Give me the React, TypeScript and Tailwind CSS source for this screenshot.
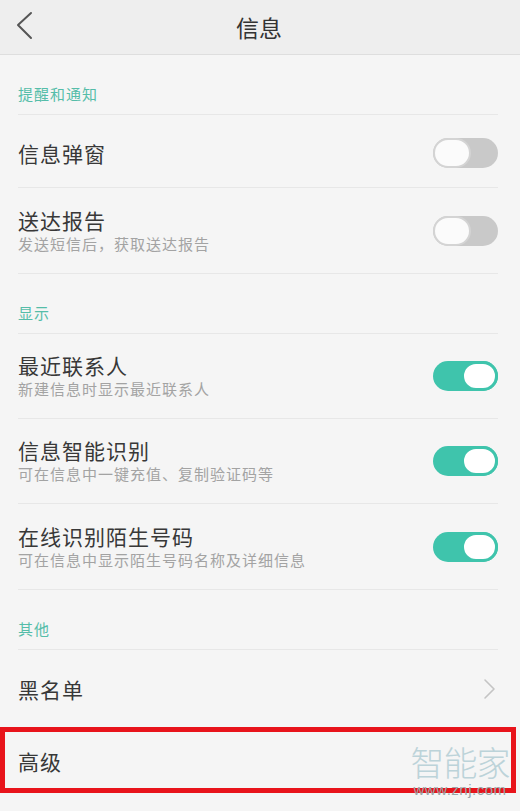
import React from "react";

const font = { fontFamily: '"Noto Sans CJK SC", "Noto Sans", sans-serif' };

function Toggle({ on }: { on: boolean }) {
  if (on) {
    return (
      <div className="relative h-[30px] w-[65px] shrink-0 rounded-full bg-[#3fc4ac]">
        <div className="absolute right-0 top-0 h-[30px] w-[37px] rounded-full border-[3px] border-[#3fc4ac] bg-white" />
      </div>
    );
  }
  return (
    <div className="relative h-[30px] w-[65px] shrink-0 rounded-full bg-[#c9c9c9]">
      <div className="absolute left-0 top-0 h-[30px] w-[38px] rounded-full border-2 border-[#d4d4d4] bg-[#fbfbfb]" />
    </div>
  );
}

function SectionHeader({ label }: { label: string }) {
  return (
    <div className="flex h-[59px] items-end pb-[10px]">
      <span className="text-[15px] leading-[20px] tracking-[1px] text-[#55bda9]">{label}</span>
    </div>
  );
}

function Divider() {
  return <div className="h-px bg-[#e7e7e7]" />;
}

function Title({ children }: { children: React.ReactNode }) {
  return <span className="text-[21px] leading-[28px] tracking-[1px] text-[#383838]">{children}</span>;
}

function Row({ title, sub, on }: { title: string; sub?: string; on: boolean }) {
  if (sub) {
    return (
      <div className="flex h-[84px] items-center justify-between">
        <div className="flex flex-col pb-[2px]">
          <Title>{title}</Title>
          <span className="mt-[-1px] text-[15px] leading-[22px] tracking-[1px] text-[#a3a3a3]">{sub}</span>
        </div>
        <Toggle on={on} />
      </div>
    );
  }
  return (
    <div className="flex h-[72px] items-center justify-between pt-[4px]">
      <Title>{title}</Title>
      <Toggle on={on} />
    </div>
  );
}

export default function App() {
  return (
    <div className="relative h-[811px] w-[520px] overflow-hidden bg-[#f5f5f5]" style={font}>
      <header className="relative flex h-[55px] items-center justify-center border-b border-[#dedede] bg-[#eeeeee]">
        <svg className="absolute left-[15px] top-[11px]" width="20" height="30" viewBox="0 0 20 30">
          <polyline points="16,2 3,14 16,27" fill="none" stroke="#555" strokeWidth="2" strokeLinecap="round" strokeLinejoin="round" />
        </svg>
        <span className="ml-[-2px] text-[23px] leading-[30px] text-[#333]">信息</span>
      </header>

      <main className="pl-[18px] pr-[22px]">
        <SectionHeader label="提醒和通知" />
        <Divider />
        <Row title="信息弹窗" on={false} />
        <Divider />
        <div className="h-px" />
        <Row title="送达报告" sub="发送短信后，获取送达报告" on={false} />
        <Divider />

        <SectionHeader label="显示" />
        <Divider />
        <Row title="最近联系人" sub="新建信息时显示最近联系人" on={true} />
        <Divider />
        <Row title="信息智能识别" sub="可在信息中一键充值、复制验证码等" on={true} />
        <Divider />
        <div className="h-px" />
        <Row title="在线识别陌生号码" sub="可在信息中显示陌生号码名称及详细信息" on={true} />
        <Divider />

        <SectionHeader label="其他" />
        <Divider />
        <div className="flex h-[77px] items-center justify-between pr-[2px]">
          <Title>黑名单</Title>
          <svg width="14" height="24" viewBox="0 0 14 24">
            <polyline points="3,3 12,12 3,21" fill="none" stroke="#c4c4c4" strokeWidth="1.6" strokeLinecap="round" strokeLinejoin="round" />
          </svg>
        </div>
        <Divider />
        <div className="flex h-[66px] items-center">
          <Title>高级</Title>
        </div>
      </main>

      <div className="absolute left-0 top-[727px] h-[66px] w-[516px] border-[5px] border-[#e8141b]" />

      <div className="absolute left-[408px] top-[742px] flex w-[104px] flex-col items-center">
        <span className="whitespace-nowrap text-[34px] leading-[40px] tracking-[-1px] text-[#bcd3d9]" style={{ fontWeight: 300 }}>智能家</span>
        <span className="mt-[0px] whitespace-nowrap text-[15px] leading-[16px] tracking-[0.5px] text-[#9aa5a8]" style={{ fontFamily: '"Liberation Sans", sans-serif' }}>www.znj.com</span>
      </div>
    </div>
  );
}
